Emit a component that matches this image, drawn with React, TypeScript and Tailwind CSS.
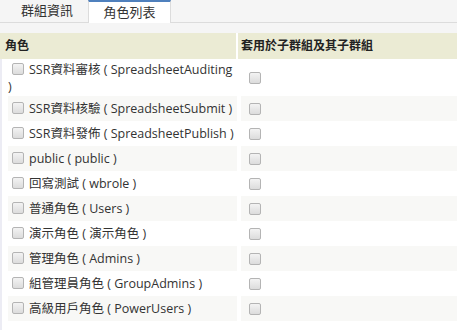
import React from "react";

const roles: [string, string][] = [
  ["SSR資料審核", "SpreadsheetAuditing"],
  ["SSR資料核驗", "SpreadsheetSubmit"],
  ["SSR資料發佈", "SpreadsheetPublish"],
  ["public", "public"],
  ["回寫測試", "wbrole"],
  ["普通角色", "Users"],
  ["演示角色", "演示角色"],
  ["管理角色", "Admins"],
  ["組管理員角色", "GroupAdmins"],
  ["高級用戶角色", "PowerUsers"],
];

const Box = ({ className = "" }: { className?: string }) => (
  <span
    className={`inline-block w-[12px] h-[12px] rounded-[2px] border border-[#b4b4b4] bg-gradient-to-b from-[#f3f3f3] to-[#dcdcdc] ${className}`}
  />
);

const App = () => {
  return (
    <div
      className="w-[457px] h-[330px] bg-white text-[#333] border-l-2 border-[#ececf4]"
      style={{ fontFamily: '"Open Sans", "Noto Sans CJK TC", sans-serif' }}
    >
      {/* tabs */}
      <div className="bg-[#f5f5f5] pt-0 pb-[10px] -ml-[2px]">
        <div className="flex h-[23px] pl-[6px] border-b border-[#dcdcdc]">
          <div className="w-[82px] flex items-center justify-center text-[13px] text-[#333]">
            群組資訊
          </div>
          <div className="w-[83px] -mb-px flex items-center justify-center text-[13px] bg-white border-t-2 border-t-[#4f80bd] border-x border-x-[#dcdcdc]">
            角色列表
          </div>
        </div>
      </div>

      {/* header */}
      <div className="-ml-[2px] grid grid-cols-[236px_1fr] h-[26px] text-[12px] font-bold text-[#222]">
        <div className="bg-[#ebebd4] flex items-center pl-[5px]">角色</div>
        <div className="bg-[#ebebd4] border-l-2 border-white flex items-center pl-[3px]">
          套用於子群組及其子群組
        </div>
      </div>

      {/* rows */}
      <div className="pl-[6px] pt-px">
        {roles.map(([name, code], i) => (
          <div key={code + i} className="grid grid-cols-[229px_1fr] gap-x-1 text-[12.5px]">
            <div
              className={`py-px leading-[17px] self-stretch flex items-center ${i % 2 ? "bg-[#f8f8f6]" : ""}`}
            >
              <div>
                <Box className="align-[-1px] ml-[4px] mr-[5px]" />
                {name} ( {code} )
              </div>
            </div>
            <div
              className={`min-h-[25px] flex items-center pl-[8px] ${i % 2 ? "bg-[#f8f8f6]" : ""}`}
            >
              <Box />
            </div>
          </div>
        ))}
      </div>
    </div>
  );
};

export default App;
